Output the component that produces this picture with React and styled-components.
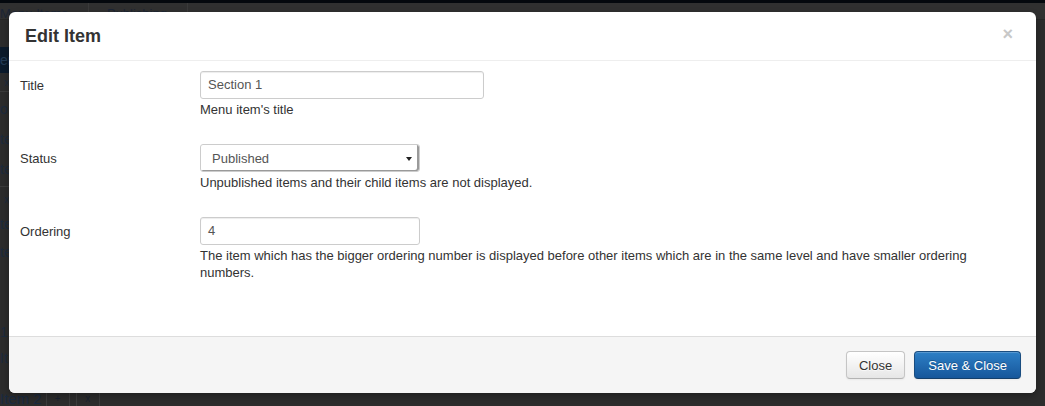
import React from 'react';
import styled, { createGlobalStyle } from 'styled-components';

const GlobalStyle = createGlobalStyle`
  html, body {
    margin: 0;
    padding: 0;
    background: #2c2c2c;
  }
  body {
    font-family: "Liberation Sans", Arial, sans-serif;
    font-size: 13px;
    color: #333;
  }
`;

// the dimmed page behind the dialog
const Page = styled.div`
  position: relative;
  width: 1045px;
  height: 406px;
  overflow: hidden;
  background: #2c2c2c;
  color: #1a2a3e;
`;

const TopStrip = styled.div`
  height: 3px;
  background: #04080d;
`;

const TabBar = styled.div`
  display: flex;
  height: 16px;
  background: #303030;
  border-bottom: 1px solid #262626;
  margin-left: -18px;
`;

const Tab = styled.div`
  padding: 0 20px 0 18px;
  line-height: 22px;
  font-size: 13px;
  color: #1c2535;
  border-right: 1px solid #3a3a3a;
`;

const SideList = styled.div`
  display: flex;
  flex-direction: column;
  width: 40px;
  margin-top: 27px;
`;

const SideRow = styled.div`
  height: ${p => p.h}px;
  line-height: ${p => p.h}px;
  font-size: ${p => (p.small ? 11 : 14)}px;
  padding-left: ${p => (p.small ? 4 : 0)}px;
  background: ${p => (p.dark ? '#0b1a2b' : 'transparent')};
  border-bottom: ${p => (p.line ? '1px solid #3b3b3b' : 'none')};
  color: ${p => (p.dark ? '#223a55' : '#1c2a3c')};
  white-space: nowrap;
`;

const BottomRow = styled.div`
  position: absolute;
  left: 0;
  bottom: 0;
  display: flex;
  align-items: center;
  height: 16px;
  font-size: 15px;
  color: #1a2a40;
`;

const MiniBtn = styled.span`
  display: inline-block;
  width: 22px;
  height: 16px;
  line-height: 18px;
  text-align: center;
  font-size: 10px;
  border-left: 1px solid #3c3c3c;
  border-right: 1px solid #3c3c3c;
  margin-left: ${p => p.gap || 0}px;
  color: #1a2230;
`;

// the dialog
const Modal = styled.div`
  position: absolute;
  left: 9px;
  top: 12px;
  width: 1027px;
  height: 381px;
  display: flex;
  flex-direction: column;
  background: #fff;
  border-radius: 6px;
  overflow: hidden;
  box-shadow: 0 3px 7px rgba(0, 0, 0, 0.3);
`;

const Header = styled.div`
  display: flex;
  align-items: center;
  justify-content: space-between;
  height: 48px;
  padding: 0 15px 0 16px;
  border-bottom: 1px solid #eee;
`;

const Heading = styled.h3`
  margin: 0;
  font-size: 18px;
  font-weight: bold;
  color: #333;
`;

const CloseX = styled.span`
  font-size: 18px;
  font-weight: bold;
  color: #c8c8c8;
  line-height: 1;
  margin-top: -4px;
  margin-right: 8px;
`;

const Body = styled.div`
  flex: 1;
  display: flex;
  flex-direction: column;
  gap: 26px;
  padding: 10px 15px 0 11px;
`;

const Row = styled.div`
  display: flex;
`;

const Label = styled.div`
  width: 180px;
  flex-shrink: 0;
  padding-top: 7px;
  line-height: 16px;
  color: #333;
`;

const Controls = styled.div`
  display: flex;
  flex-direction: column;
  flex: 1;
`;

const Input = styled.div`
  box-sizing: border-box;
  width: ${p => p.w}px;
  height: 28px;
  padding-left: 7px;
  line-height: 26px;
  border: 1px solid #ccc;
  border-radius: 3px;
  box-shadow: inset 0 1px 1px rgba(0, 0, 0, 0.075);
  color: #555;
  font-size: 13px;
`;

const Select = styled.div`
  box-sizing: border-box;
  display: flex;
  align-items: center;
  justify-content: space-between;
  width: 220px;
  height: 28px;
  padding: 0 7px 0 11px;
  border: 1px solid #ccc;
  border-radius: 3px;
  box-shadow: inset -2px -1px 0 #9a9a9a;
  color: #555;
  font-size: 13px;
`;

const Caret = styled.span`
  width: 0;
  height: 0;
  border-left: 3px solid transparent;
  border-right: 3px solid transparent;
  border-top: 4px solid #222;
  margin-top: 1px;
`;

const Help = styled.div`
  margin-top: 2px;
  line-height: 17px;
  color: #333;
  max-width: 800px;
`;

const Footer = styled.div`
  display: flex;
  justify-content: flex-end;
  gap: 9px;
  height: 57px;
  box-sizing: border-box;
  padding: 14px 15px;
  background: #f5f5f5;
  border-top: 1px solid #ddd;
`;

const Button = styled.button`
  box-sizing: border-box;
  height: 28px;
  padding: 0 ${p => (p.primary ? 13 : 12)}px;
  font-family: "Liberation Sans", Arial, sans-serif;
  font-size: 13px;
  border-radius: 4px;
  border: 1px solid ${p => (p.primary ? '#1a4d80' : '#c5c5c5')};
  border-bottom-color: ${p => (p.primary ? '#143f6b' : '#b3b3b3')};
  color: ${p => (p.primary ? '#fff' : '#333')};
  text-shadow: ${p => (p.primary ? '0 -1px 0 rgba(0,0,0,0.25)' : '0 1px 1px rgba(255,255,255,0.75)')};
  background: ${p =>
    p.primary
      ? 'linear-gradient(#2d7fc6, #17579b)'
      : 'linear-gradient(#ffffff, #e6e6e6)'};
  box-shadow: inset 0 1px 0 rgba(255, 255, 255, 0.2), 0 1px 2px rgba(0, 0, 0, 0.05);
`;

const fields = [
  { label: 'Title', kind: 'input', value: 'Section 1', w: 284, help: "Menu item's title" },
  { label: 'Status', kind: 'select', value: 'Published', help: 'Unpublished items and their child items are not displayed.' },
  {
    label: 'Ordering',
    kind: 'input',
    value: '4',
    w: 220,
    help: 'The item which has the bigger ordering number is displayed before other items which are in the same level and have smaller ordering numbers.',
  },
];

const sideRows = [
  { h: 26, dark: true, text: 'en' },
  { h: 18, line: true, small: true, text: 'x' },
  { h: 34, text: 'o' },
  { h: 26, text: 'te' },
  { h: 34, line: true, text: 'te' },
  { h: 24, small: true, text: 'x' },
  { h: 26, text: 'te' },
  { h: 30, text: 'te' },
  { h: 52, text: '' },
  { h: 26, text: '1' },
  { h: 26, text: 'It' },
];

export default function App() {
  return (
    <>
      <GlobalStyle />
      <Page>
        <TopStrip />
        <TabBar>
          <Tab>Menu Items</Tab>
          <Tab>Publishing</Tab>
        </TabBar>
        <SideList>
          {sideRows.map((r, i) => (
            <SideRow key={i} h={r.h} dark={r.dark} line={r.line} small={r.small}>
              {r.text}
            </SideRow>
          ))}
        </SideList>
        <BottomRow>
          Item 2
          <MiniBtn gap={4}>+</MiniBtn>
          <MiniBtn gap={6}>x</MiniBtn>
        </BottomRow>

        <Modal>
          <Header>
            <Heading>Edit Item</Heading>
            <CloseX>×</CloseX>
          </Header>
          <Body>
            {fields.map(f => (
              <Row key={f.label}>
                <Label>{f.label}</Label>
                <Controls>
                  {f.kind === 'select' ? (
                    <Select>
                      {f.value}
                      <Caret />
                    </Select>
                  ) : (
                    <Input w={f.w}>{f.value}</Input>
                  )}
                  <Help>{f.help}</Help>
                </Controls>
              </Row>
            ))}
          </Body>
          <Footer>
            <Button>Close</Button>
            <Button primary>Save &amp; Close</Button>
          </Footer>
        </Modal>
      </Page>
    </>
  );
}
